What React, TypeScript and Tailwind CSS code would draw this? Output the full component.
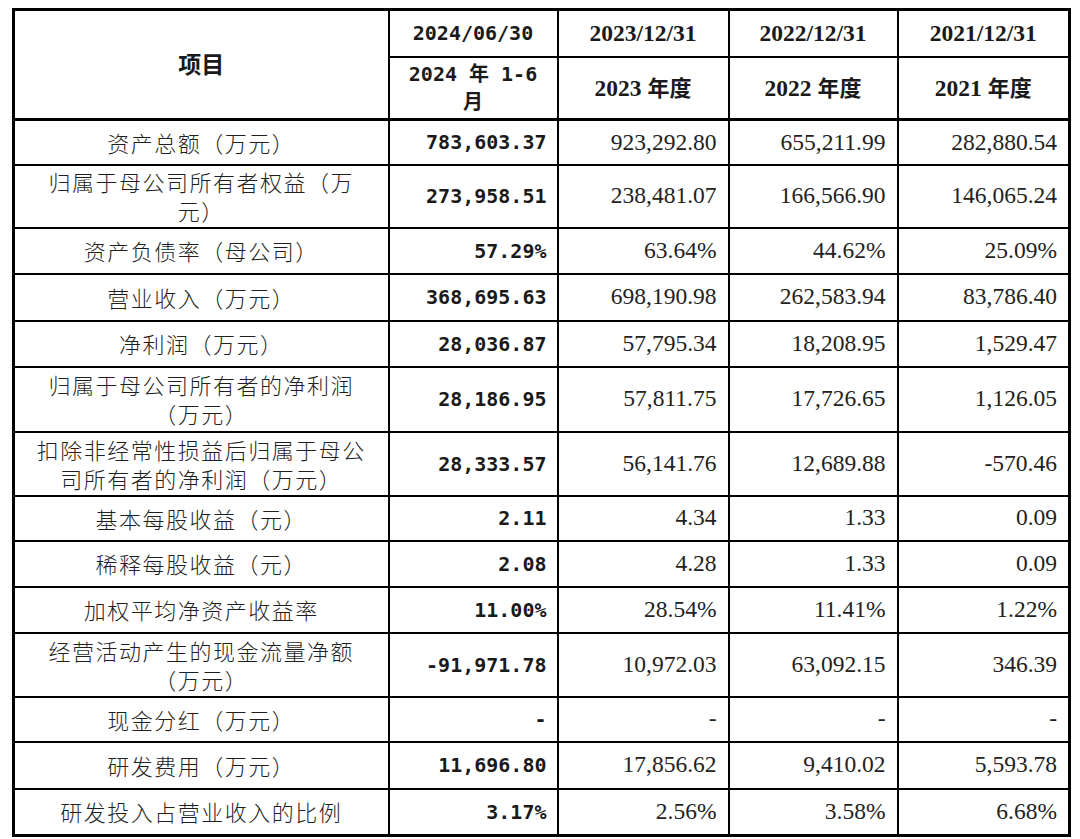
import React from "react";

const rows: { label: React.ReactNode; v: string[]; h: string }[] = [
  { label: "资产总额（万元）", v: ["783,603.37", "923,292.80", "655,211.99", "282,880.54"], h: "h-[45px]" },
  { label: <>归属于母公司所有者权益（万<br />元）</>, v: ["273,958.51", "238,481.07", "166,566.90", "146,065.24"], h: "h-[63px]" },
  { label: "资产负债率（母公司）", v: ["57.29%", "63.64%", "44.62%", "25.09%"], h: "h-[46px]" },
  { label: "营业收入（万元）", v: ["368,695.63", "698,190.98", "262,583.94", "83,786.40"], h: "h-[47px]" },
  { label: "净利润（万元）", v: ["28,036.87", "57,795.34", "18,208.95", "1,529.47"], h: "h-[46px]" },
  { label: <>归属于母公司所有者的净利润<br />（万元）</>, v: ["28,186.95", "57,811.75", "17,726.65", "1,126.05"], h: "h-[65px]" },
  { label: <>扣除非经常性损益后归属于母公<br />司所有者的净利润（万元）</>, v: ["28,333.57", "56,141.76", "12,689.88", "-570.46"], h: "h-[64px]" },
  { label: "基本每股收益（元）", v: ["2.11", "4.34", "1.33", "0.09"], h: "h-[45px]" },
  { label: "稀释每股收益（元）", v: ["2.08", "4.28", "1.33", "0.09"], h: "h-[46px]" },
  { label: "加权平均净资产收益率", v: ["11.00%", "28.54%", "11.41%", "1.22%"], h: "h-[46px]" },
  { label: <>经营活动产生的现金流量净额<br />（万元）</>, v: ["-91,971.78", "10,972.03", "63,092.15", "346.39"], h: "h-[64px]" },
  { label: "现金分红（万元）", v: ["-", "-", "-", "-"], h: "h-[45px]" },
  { label: "研发费用（万元）", v: ["11,696.80", "17,856.62", "9,410.02", "5,593.78"], h: "h-[47px]" },
  { label: "研发投入占营业收入的比例", v: ["3.17%", "2.56%", "3.58%", "6.68%"], h: "h-[47px]" },
];

const cjk = "font-['Noto_Sans_CJK_SC',sans-serif]";
const mono = "font-['DejaVu_Sans_Mono','Noto_Sans_CJK_SC',monospace]";
const serif = "font-['Liberation_Serif','Noto_Sans_CJK_SC',serif]";
const cell = "border-2 border-black p-0";

export default function App() {
  return (
    <div className="min-h-[839px] w-[1080px] bg-white pl-[12px] pt-[8px]">
      <table className="w-[1056px] table-fixed border-collapse border-[3px] border-black text-[#1a1a1a]">
        <colgroup>
          <col className="w-[375px]" />
          <col className="w-[169px]" />
          <col className="w-[171px]" />
          <col className="w-[169px]" />
          <col className="w-[172px]" />
        </colgroup>
        <thead>
          <tr className="h-[47px]">
            <th rowSpan={2} className={`${cell} border-b-[3px] ${cjk} text-[23px] font-bold text-center align-middle`}>
              <div className="-mt-[3px]">项目</div>
            </th>
            <th className={`${cell} ${mono} text-[20px] font-bold text-center`}>2024/06/30</th>
            <th className={`${cell} ${serif} text-[23.5px] font-bold text-center`}>2023/12/31</th>
            <th className={`${cell} ${serif} text-[23.5px] font-bold text-center`}>2022/12/31</th>
            <th className={`${cell} ${serif} text-[23.5px] font-bold text-center`}>2021/12/31</th>
          </tr>
          <tr className="h-[63px]">
            <th className={`${cell} border-b-[3px] ${mono} text-[20px] font-bold text-center leading-[28px]`}>
              2024 年 1-6<br />月
            </th>
            {["2023", "2022", "2021"].map((y) => (
              <th key={y} className={`${cell} border-b-[3px] ${serif} text-[23.5px] font-bold text-center`}>
                {y} <span className={`${cjk} text-[22px]`}>年度</span>
              </th>
            ))}
          </tr>
        </thead>
        <tbody>
          {rows.map((r, i) => (
            <tr key={i} className={r.h}>
              <td className={`${cell} ${cjk} text-[22px] font-light text-[#1f1f1f] text-center leading-[29px] tracking-[1.5px]`}>{r.label}</td>
              <td className={`${cell} ${mono} text-[20px] font-bold text-right pr-[10px]`}>{r.v[0]}</td>
              {r.v.slice(1).map((v, j) => (
                <td key={j} className={`${cell} ${serif} text-[23.5px] text-[#222] text-right pr-[11px]`}>{v}</td>
              ))}
            </tr>
          ))}
        </tbody>
      </table>
    </div>
  );
}
